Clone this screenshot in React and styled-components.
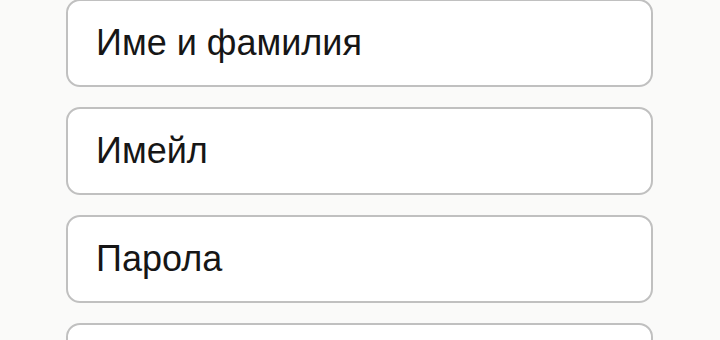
import React from "react";
import styled, { createGlobalStyle } from "styled-components";

const GlobalStyle = createGlobalStyle`
  html, body {
    margin: 0;
    padding: 0;
    background: #fafaf9;
    overflow: hidden;
  }
`;

const Form = styled.form`
  display: flex;
  flex-direction: column;
  gap: 20px;
  width: 587px;
  margin: -1px 0 0 66px;
  font-family: "Liberation Sans", Arial, sans-serif;
`;

const Field = styled.input`
  box-sizing: border-box;
  width: 100%;
  height: 88px;
  padding: 0 28px;
  border: 2px solid #c0c0c0;
  border-radius: 14px;
  background: #ffffff;
  font-family: inherit;
  font-size: 36px;
  color: #161616;
  outline: none;

  &::placeholder {
    color: #161616;
    opacity: 1;
  }
`;

const fields = [
  { name: "name", type: "text", placeholder: "Име и фамилия" },
  { name: "email", type: "email", placeholder: "Имейл" },
  { name: "password", type: "password", placeholder: "Парола" },
  { name: "confirm", type: "password", placeholder: "Потвърди паролата" },
];

export default function App() {
  return (
    <>
      <GlobalStyle />
      <Form onSubmit={(e) => e.preventDefault()}>
        {fields.map((f) => (
          <Field key={f.name} name={f.name} type={f.type} placeholder={f.placeholder} />
        ))}
      </Form>
    </>
  );
}
